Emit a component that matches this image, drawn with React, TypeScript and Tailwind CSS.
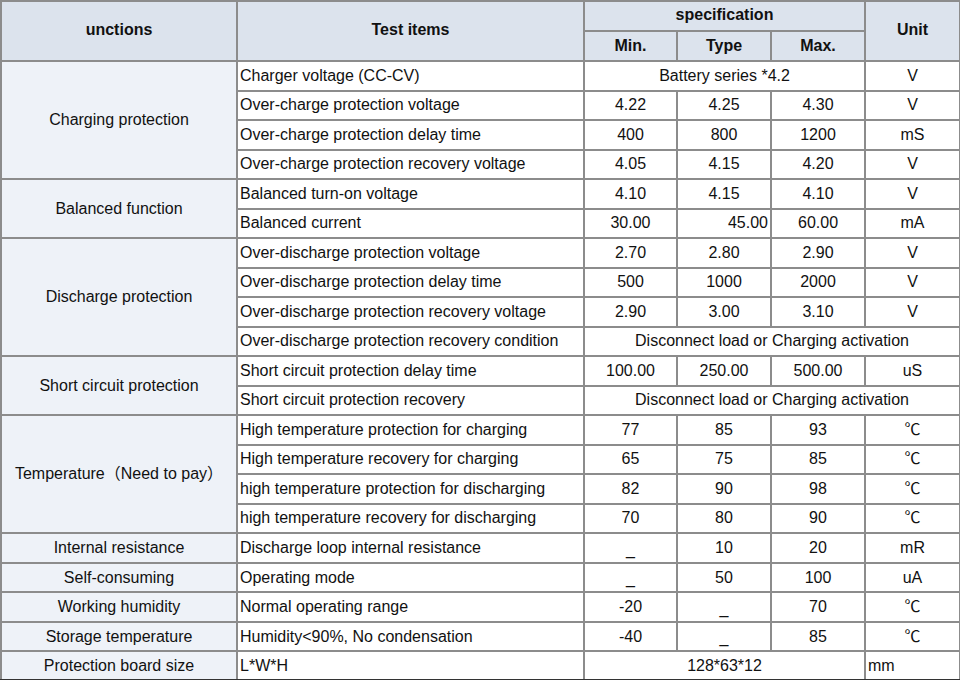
import React from "react";

type Row = {
  group?: { label: string; span: number };
  item: string;
  min?: string;
  type?: string;
  max?: string;
  merged?: string;
  unit: string;
  typeRight?: boolean;
  unitLeft?: boolean;
};

const rows: Row[] = [
  { group: { label: "Charging protection", span: 4 }, item: "Charger voltage (CC-CV)", merged: "Battery series *4.2", unit: "V" },
  { item: "Over-charge protection voltage", min: "4.22", type: "4.25", max: "4.30", unit: "V" },
  { item: "Over-charge protection delay time", min: "400", type: "800", max: "1200", unit: "mS" },
  { item: "Over-charge protection recovery voltage", min: "4.05", type: "4.15", max: "4.20", unit: "V" },
  { group: { label: "Balanced function", span: 2 }, item: "Balanced turn-on voltage", min: "4.10", type: "4.15", max: "4.10", unit: "V" },
  { item: "Balanced current", min: "30.00", type: "45.00", max: "60.00", unit: "mA", typeRight: true },
  { group: { label: "Discharge protection", span: 4 }, item: "Over-discharge protection voltage", min: "2.70", type: "2.80", max: "2.90", unit: "V" },
  { item: "Over-discharge protection delay time", min: "500", type: "1000", max: "2000", unit: "V" },
  { item: "Over-discharge protection recovery voltage", min: "2.90", type: "3.00", max: "3.10", unit: "V" },
  { item: "Over-discharge protection recovery condition", merged: "Disconnect load or Charging activation", unit: "" },
  { group: { label: "Short circuit protection", span: 2 }, item: "Short circuit protection delay time", min: "100.00", type: "250.00", max: "500.00", unit: "uS" },
  { item: "Short circuit protection recovery", merged: "Disconnect load or Charging activation", unit: "" },
  { group: { label: "Temperature\uFF08Need to pay\uFF09", span: 4 }, item: "High temperature protection for charging", min: "77", type: "85", max: "93", unit: "\u2103" },
  { item: "High temperature recovery for charging", min: "65", type: "75", max: "85", unit: "\u2103" },
  { item: "high temperature protection for discharging", min: "82", type: "90", max: "98", unit: "\u2103" },
  { item: "high temperature recovery for discharging", min: "70", type: "80", max: "90", unit: "\u2103" },
  { group: { label: "Internal resistance", span: 1 }, item: "Discharge loop internal resistance", min: "_", type: "10", max: "20", unit: "mR" },
  { group: { label: "Self-consuming", span: 1 }, item: "Operating mode", min: "_", type: "50", max: "100", unit: "uA" },
  { group: { label: "Working humidity", span: 1 }, item: "Normal operating range", min: "-20", type: "_", max: "70", unit: "\u2103" },
  { group: { label: "Storage temperature", span: 1 }, item: "Humidity<90%, No condensation", min: "-40", type: "_", max: "85", unit: "\u2103" },
  { group: { label: "Protection board size", span: 1 }, item: "L*W*H", merged: "128*63*12", unit: "mm", unitLeft: true },
];

const bd = "border-2 border-[#8c8c8c]";

function Val({ v, right }: { v?: string; right?: boolean }) {
  if (v === "_") {
    return (
      <td className={`${bd} text-center align-bottom pb-[4px]`}>
        <span>_</span>
      </td>
    );
  }
  return <td className={`${bd} ${right ? "text-right pr-[2px]" : "text-center"}`}>{v}</td>;
}

export default function App() {
  return (
    <div
      className="w-[960px] h-[680px] bg-white overflow-hidden text-[#111] text-[16px] leading-none"
      style={{ fontFamily: '"Liberation Sans", Arial, "Noto Sans CJK SC", sans-serif' }}
    >
      <table className="border-collapse table-fixed w-[959px] border-b-[3px] border-b-[#333]">
        <colgroup>
          <col className="w-[236px]" />
          <col className="w-[347px]" />
          <col className="w-[93px]" />
          <col className="w-[94px]" />
          <col className="w-[94px]" />
          <col className="w-[95px]" />
        </colgroup>
        <thead>
          <tr className="h-[30px]">
            <th rowSpan={2} className={`${bd} bg-[#dce3ed] font-bold pb-[2px]`}>unctions</th>
            <th rowSpan={2} className={`${bd} bg-[#dce3ed] font-bold pb-[2px]`}>Test items</th>
            <th colSpan={3} className={`${bd} bg-[#dce3ed] font-bold pb-[2px]`}>specification</th>
            <th rowSpan={2} className={`${bd} bg-[#dce3ed] font-bold pb-[2px]`}>Unit</th>
          </tr>
          <tr className="h-[30px]">
            <th className={`${bd} bg-[#dce3ed] font-bold`}>Min.</th>
            <th className={`${bd} bg-[#dce3ed] font-bold`}>Type</th>
            <th className={`${bd} bg-[#dce3ed] font-bold`}>Max.</th>
          </tr>
        </thead>
        <tbody>
          {rows.map((r, i) => (
            <tr key={i} className="h-[29.52px]">
              {r.group && (
                <td rowSpan={r.group.span} className={`${bd} bg-[#eef2f8] text-center whitespace-nowrap`}>
                  {r.group.label}
                </td>
              )}
              <td className={`${bd} pl-[2px] whitespace-nowrap`}>{r.item}</td>
              {r.merged !== undefined ? (
                <td colSpan={r.unit === "" ? 4 : 3} className={`${bd} text-center whitespace-nowrap`}>
                  {r.merged}
                </td>
              ) : (
                <>
                  <Val v={r.min} />
                  <Val v={r.type} right={r.typeRight} />
                  <Val v={r.max} />
                </>
              )}
              {r.unit !== "" && (
                <td className={`${bd} ${r.unitLeft ? "text-left pl-[2px]" : "text-center"}`}>{r.unit}</td>
              )}
            </tr>
          ))}
        </tbody>
      </table>
    </div>
  );
}
